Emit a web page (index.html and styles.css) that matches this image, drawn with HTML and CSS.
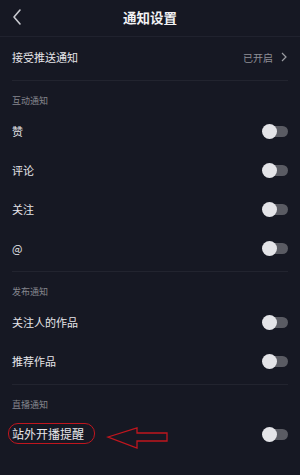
FILE: index.html
```html
<!DOCTYPE html>
<html lang="zh">
<head>
<meta charset="utf-8">
<link rel="stylesheet" href="styles.css">
</head>
<body>
<div class="page">
  <header class="header">
    <svg class="back" width="12" height="18" viewBox="0 0 12 18"><path d="M9 2 L3 9 L9 16" fill="none" stroke="#c9cad0" stroke-width="1.6" stroke-linecap="round" stroke-linejoin="round"/></svg>
    <div class="title">通知设置</div>
  </header>
  <div class="push-row">
    <span class="item-text">接受推送通知</span>
    <span class="status">已开启
      <svg width="6" height="10" viewBox="0 0 6 10"><path d="M1 1 L5 5 L1 9" fill="none" stroke="#9b9ca2" stroke-width="1.2"/></svg>
    </span>
  </div>
  <div class="divider"></div>
  <section class="section">
    <div class="label">互动通知</div>
    <div class="row"><span class="item-text">赞</span><span class="toggle"></span></div>
    <div class="row"><span class="item-text">评论</span><span class="toggle"></span></div>
    <div class="row"><span class="item-text">关注</span><span class="toggle"></span></div>
    <div class="row"><span class="item-text">@</span><span class="toggle"></span></div>
  </section>
  <div class="divider"></div>
  <section class="section">
    <div class="label">发布通知</div>
    <div class="row"><span class="item-text">关注人的作品</span><span class="toggle"></span></div>
    <div class="row"><span class="item-text">推荐作品</span><span class="toggle"></span></div>
  </section>
  <div class="divider"></div>
  <section class="section">
    <div class="label">直播通知</div>
    <div class="row live-row"><span class="item-text live-text">站外开播提醒</span><span class="toggle"></span></div>
  </section>
  <div class="annot-ellipse"></div>
  <svg class="annot-arrow" width="64" height="24" viewBox="106 426 64 24">
    <polygon points="108,437 137,428 137,433 167,433 167,441 137,441 137,448" fill="none" stroke="#c0161e" stroke-width="1.3" stroke-linejoin="miter"/>
  </svg>
</div>
</body>
</html>
```
FILE: styles.css
```css
html, body {
  margin: 0;
  padding: 0;
  background: #161823;
}
.page {
  position: relative;
  width: 300px;
  height: 475px;
  overflow: hidden;
  background: #161823;
  font-family: "Noto Sans CJK SC", "Noto Sans", sans-serif;
  color: #e6e6ea;
}
.header {
  position: relative;
  height: 36px;
  border-bottom: 1px solid #20222e;
  display: flex;
  align-items: center;
  justify-content: center;
}
.back {
  position: absolute;
  left: 11px;
  top: 8px;
}
.title {
  font-size: 13.5px;
  font-weight: 700;
  color: #f2f2f4;
  margin-top: -2px;
}
.push-row {
  height: 40px;
  padding: 0 12px 3px;
  display: flex;
  align-items: center;
  justify-content: space-between;
}
.item-text {
  font-size: 11px;
  line-height: 14px;
  color: #e6e6ea;
}
.live-text {
  font-size: 12px;
}
.status {
  font-size: 10px;
  color: #8e8f96;
  display: flex;
  align-items: center;
  gap: 8px;
  margin-right: 1px;
}
.divider {
  height: 1px;
  margin: 0 12px;
  background: #22242f;
}
.section {
  padding-bottom: 3px;
}
.label {
  font-size: 9px;
  line-height: 12px;
  color: #85868d;
  padding: 14px 12px 5px;
}
.row {
  height: 37px;
  padding: 0 12px 2px;
  display: flex;
  align-items: center;
  justify-content: space-between;
}
.live-row {
  padding-bottom: 4px;
  height: 35px;
}
.toggle {
  position: relative;
  width: 26px;
  height: 15px;
  margin-top: 2px;
}
.toggle::before {
  content: "";
  position: absolute;
  left: 5px;
  right: 0;
  top: 2px;
  height: 11px;
  border-radius: 6px;
  background: #5a5b63;
}
.toggle::after {
  content: "";
  position: absolute;
  left: 0;
  top: 0;
  width: 15px;
  height: 15px;
  border-radius: 50%;
  background: #e4e4e8;
}
.annot-ellipse {
  position: absolute;
  left: 8px;
  top: 423px;
  width: 85px;
  height: 19px;
  border: 1.4px solid #c0161e;
  border-radius: 10px;
}
.annot-arrow {
  position: absolute;
  left: 106px;
  top: 426px;
}
```
